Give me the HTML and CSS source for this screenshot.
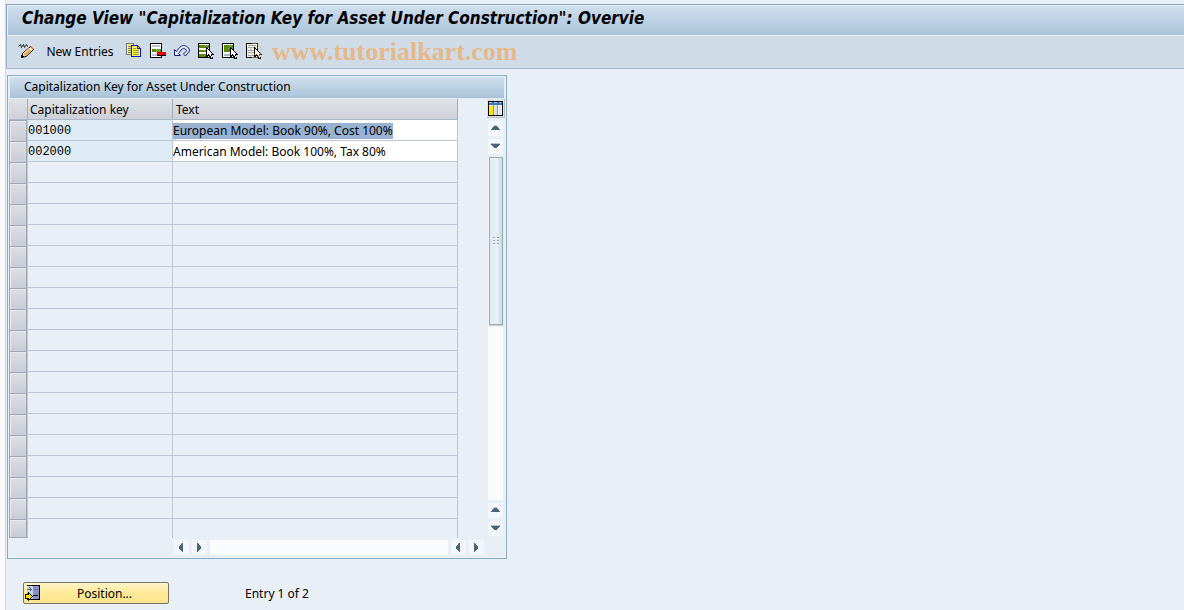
FILE: index.html
```html
<!doctype html>
<html lang="en">
  <head>
    <meta charset="utf-8">
    <title>Change View "Capitalization Key for Asset Under Construction"</title>
    <link rel="stylesheet" href="styles.css">
  </head>
  <body>
    <svg class="symbols" aria-hidden="true">
      <symbol id="up" viewBox="0 0 15 15"><path fill="#b9c4cc" d="M6 4h3v1h1v1h1v1h-7v-1h1v-1h1z"/><path fill="#4d6475" d="M6 5h3v1h1v1h1v1h1v1H3V8h1V7h1V6h1z"/></symbol>
      <symbol id="down" viewBox="0 0 15 15"><path fill="#b9c4cc" d="M3 4h9v1H3z"/><path fill="#4d6475" d="M3 5h9v1h-1v1h-1v1H9v1H6V8H5V7H4V6H3z"/></symbol>
      <symbol id="left" viewBox="0 0 15 15"><path fill="#b9c4cc" d="M7 3h2v2H7z"/><path fill="#4d6475" d="M9 3v9H8v-1H7v-1H6V9H5V6h1V5h1V4h1V3z"/></symbol>
      <symbol id="right" viewBox="0 0 15 15"><path fill="#b9c4cc" d="M5 3h2v2H5z"/><path fill="#4d6475" d="M5 3v9h1v-1h1v-1h1V9h1V6H8V5H7V4H6V3z"/></symbol>
      <symbol id="pointer" viewBox="0 0 8 12"><path d="M0 0h1v1h1v1h1v1h1v1h1v1h1v1h1v1h1v1H6v2h1v2H4v-1H3V9H2v1H1v1H0z"/><path fill="#fff" d="M1 2h1v1h1v1h1v1h1v1h1v1H5v2h1v2H5V9H4V8H3V7H2v1H1z"/></symbol>
    </svg>

    <header class="title-bar">
      <h1>Change View "Capitalization Key for Asset Under Construction": Overvie</h1>
    </header>

    <div class="toolbar">
      <button class="tool" aria-label="Display/Change">
        <svg class="smooth" viewBox="0 0 16 16">
          <path fill="none" stroke="#222" d="M.5 3.500l2-2 1 3 2-3 1 3 2-3 1 2"/>
          <path fill="#fff" stroke="#000" d="M3.500 14.500l1-4 8-7 3 3-7.500 7z"/>
          <path fill="#f0a030" d="M5 11l6-5.500 2 2L7.500 13z"/>
          <path fill="#ffe49a" d="M6 10l5-5 1 1-5.500 5z"/>
          <path fill="#d86020" d="M12 4l1-1 3 3-1 1z"/>
          <path d="M3 12h2v1h1v1H4v1H3z"/>
        </svg>
      </button>
      <button class="tool-text">New Entries</button>
      <button class="tool" aria-label="Copy As">
        <svg viewBox="0 0 16 16">
          <path fill="#ffee66" stroke="#777b80" d="M.5.5h7v11h-7z"/>
          <path stroke="#777b80" d="M2 3.500h4M2 5.500h3M2 7.500h3M2 9.500h3"/>
          <path fill="#ffff50" stroke="#1414c8" d="M5.500 2.500h6l3 3v8h-9z"/>
          <path fill="#fff" stroke="#1414c8" d="M11.500 2.500v3h3z"/>
          <path stroke="#a09a40" d="M7 5.500h3M7 7.500h6M7 9.500h6M7 11.500h6"/>
        </svg>
      </button>
      <button class="tool" aria-label="Delete">
        <svg viewBox="0 0 16 16">
          <path fill="#fff" stroke="#000" d="M.5.5h11v14H.5z"/>
          <path fill="#b8c6d8" d="M2 2h8v2H2zM2 11h5v2H2z"/>
          <path fill="#5c8800" d="M2 6h9v3H2z"/>
          <path fill="#a8c050" d="M6 6h1v1H6zM8 6h1v1H8zM7 7h1v1H7zM9 7h1v1H9zM6 8h1v1H6z"/>
          <path fill="#000" d="M7 10h9v3H7z"/>
          <path fill="#e00" d="M7 9h9v3H7z"/>
        </svg>
      </button>
      <button class="tool" aria-label="Undo Change">
        <svg class="smooth" viewBox="0 0 16 16">
          <path fill="#e4edf5" stroke="#1c1c90" d="M.5 6.500v6h6l-2-2C6 8 8 5.500 9.500 5.500c2 0 3 1.500 3 2.500L9.500 11l2 2 4-5c0-3-3-5.500-6-5.500C7 2.500 5 5 2.500 8.500z"/>
        </svg>
      </button>
      <button class="tool" aria-label="Select All">
        <svg viewBox="0 0 16 16">
          <path fill="#fff" stroke="#000" d="M.5.5h11v14H.5z"/>
          <path fill="#5c8800" d="M1 2h10v3H1zM1 7h9v2H1zM1 11h8v3H1z"/>
          <path fill="#9ab840" d="M7 2h1v1H7zM9 2h1v1H9zM8 3h1v1H8zM6 7h1v1H6zM6 12h1v1H6z"/>
          <use href="#pointer" x="8" y="4" width="8" height="12"/>
        </svg>
      </button>
      <button class="tool" aria-label="Select Block">
        <svg viewBox="0 0 16 16">
          <path fill="#fff" stroke="#000" d="M.5.5h11v14H.5z"/>
          <path fill="#5c8800" d="M2 2h9v7H2z"/>
          <path fill="#9ab840" d="M7 2h1v1H7zM9 2h1v1H9zM8 3h1v1H8zM7 4h1v1H7zM6 5h1v1H6z"/>
          <path fill="#a4b8cc" d="M2 11h7v2H2z"/>
          <use href="#pointer" x="8" y="4" width="8" height="12"/>
        </svg>
      </button>
      <button class="tool" aria-label="Deselect All">
        <svg viewBox="0 0 16 16">
          <path fill="#fff" stroke="#000" d="M.5.5h11v14H.5z"/>
          <path stroke="#8fa4ba" d="M2 2.500h8M2 4.500h8M2 7.500h7M2 9.500h7M2 12.500h7"/>
          <use href="#pointer" x="8" y="4" width="8" height="12"/>
        </svg>
        <span class="copyright">©</span>
      </button>
      <span class="watermark">www.tutorialkart.com</span>
    </div>

    <main>
      <section class="panel">
        <h2>Capitalization Key for Asset Under Construction</h2>
        <div class="panel-body">
          <table>
            <thead>
              <tr>
                <th class="selector"></th>
                <th class="key">Capitalization key</th>
                <th class="text">Text</th>
              </tr>
            </thead>
            <tbody>
              <tr class="filled">
                <td class="selector"><button aria-label="Select row 1"></button></td>
                <td class="key">001000</td>
                <td class="text"><input id="current" type="text" aria-label="Text for 001000" value="European Model: Book 90%, Cost 100%"></td>
              </tr>
              <tr class="filled">
                <td class="selector"><button aria-label="Select row 2"></button></td>
                <td class="key">002000</td>
                <td class="text"><input type="text" aria-label="Text for 002000" value="American Model: Book 100%, Tax 80%"></td>
              </tr>
            </tbody>
          </table>
          <div class="side">
            <button class="config" aria-label="Table settings">
              <svg viewBox="0 0 15 15">
                <path d="M0 0h15v15H0z"/>
                <path fill="#fff" d="M1 1h13v13H1z"/>
                <path fill="#3878c0" d="M1 1h13v3H1z"/>
                <path fill="#a8d0f0" d="M1 1h3v1H1zM6 1h3v1H6zM11 1h2v1h-2z"/>
                <path fill="#ffe600" d="M1 5h4v9H1z"/>
                <path fill="#d8e0e8" d="M6 5h3v9H6zM11 5h2v9h-2z"/>
                <path fill="#8a939c" d="M5 4h1v10H5zM9 4h1v10H9z"/>
              </svg>
            </button>
            <button class="arrow" aria-label="First line"><svg><use href="#up"/></svg></button>
            <button class="arrow" aria-label="Previous line"><svg><use href="#down"/></svg></button>
            <div class="track">
              <div class="thumb"><svg viewBox="0 0 6 8"><path fill="#8fa3b0" d="M0 0h2v1H0zM0 3h2v1H0zM0 6h2v1H0zM4 0h2v1H4zM4 3h2v1H4zM4 6h2v1H4z"/><path fill="#fff" d="M0 1h1v1H0zM0 4h1v1H0zM0 7h1v1H0zM4 1h1v1H4zM4 4h1v1H4zM4 7h1v1H4z"/></svg></div>
            </div>
            <button class="arrow" aria-label="Next line"><svg><use href="#up"/></svg></button>
            <button class="arrow" aria-label="Last line"><svg><use href="#down"/></svg></button>
          </div>
        </div>
        <div class="bottom-scroll">
          <button class="arrow" aria-label="First column"><svg><use href="#left"/></svg></button>
          <button class="arrow" aria-label="Previous column"><svg><use href="#right"/></svg></button>
          <div class="track"></div>
          <button class="arrow" aria-label="Next column"><svg><use href="#left"/></svg></button>
          <button class="arrow" aria-label="Last column"><svg><use href="#right"/></svg></button>
        </div>
      </section>

      <footer>
        <button class="position">
          <svg viewBox="0 0 16 16">
            <path fill="#000" d="M2 0h13v15H2z"/>
            <path fill="#c6d6e6" d="M2 1h6v13H2z"/>
            <path fill="#8c90c8" d="M8 1h6v13H8z"/>
            <path stroke="#56606c" fill="none" d="M2 4.500h4M4.500 2.500l2 2-2 2M2 8.500h3"/>
            <path stroke="#6c70a8" d="M9 4.500h4"/>
            <path stroke="#000" d="M8 10.500h5"/>
            <path fill="#ffe600" stroke="#000" d="M.5 9.500h3v-2l4 4-4 4v-2h-3z"/>
          </svg>
          <span>Position...</span>
        </button>
        <span>Entry 1 of 2</span>
      </footer>
    </main>
    <script>
      // pad the grid with empty lines up to the visible row count
      const tbody = document.querySelector('tbody');
      for (let i = tbody.rows.length; i < 20; i++) {
        tbody.insertAdjacentHTML('beforeend',
          `<tr><td class="selector"><button aria-label="Select row ${i + 1}"></button></td><td class="key"></td><td class="text"></td></tr>`);
      }
      document.getElementById('current').select();
    </script>
  </body>
</html>
```
FILE: styles.css
```css
* {
  box-sizing: border-box;
}
body {
  margin: 0;
  padding-top: 4px;
  background: linear-gradient(to right, #fafafc 5px, #cfd7e2 5px, #cfd7e2 6px, #e8eff6 6px);
  color: #000;
  font: 12px/16px "Noto Sans", sans-serif;
}
button, input {
  margin: 0;
  padding: 0;
  border: 0;
  background: none;
  color: inherit;
  font: inherit;
}
svg {
  display: block;
  shape-rendering: crispEdges;
}
svg.smooth {
  shape-rendering: auto;
}
.symbols {
  position: absolute;
  width: 0;
  height: 0;
}

/* title and toolbar */
.title-bar {
  margin-left: 6px;
  height: 32px;
  padding-left: 15px;
  border-top: 1px solid #8fa5c0;
  border-left: 1px solid #8fa5c0;
  background: linear-gradient(#d0e0ed, #a9c2da);
  box-shadow: inset 1px 1px #e6eff6, inset 0 -1px #e6eff6;
}
h1 {
  margin: 0;
  font: italic bold 17px/27px "DejaVu Sans Condensed", "DejaVu Sans", sans-serif;
  white-space: nowrap;
}
.toolbar {
  display: flex;
  align-items: center;
  gap: 8px;
  height: 33px;
  margin-left: 6px;
  padding-left: 11px;
  padding-bottom: 2px;
  border-left: 1px solid #9db0c8;
  border-bottom: 1px solid #a6b6cc;
  background: #cfdce7;
}
.tool {
  position: relative;
  width: 16px;
  height: 16px;
}
.tool svg {
  width: 16px;
  height: 16px;
}
.tool-text {
  margin: 0 4px;
  padding-top: 2px;
  width: 68px;
  white-space: nowrap;
}
.watermark, .copyright {
  color: #e4b88a;
  font-family: "Liberation Serif", serif;
}
.watermark {
  padding: 2px 0 0 2px;
  font-size: 26px;
  line-height: 28px;
  font-weight: bold;
}
.copyright {
  position: absolute;
  top: -6px;
  left: 0;
  font-size: 22px;
  line-height: 28px;
  opacity: 0.7;
}

/* table control */
main {
  margin-left: 7px;
  padding-top: 6px;
}
.panel {
  width: 500px;
  height: 484px;
  border: 1px solid #8aaccb;
  padding: 1px;
}
h2 {
  margin: 0;
  height: 22px;
  padding-left: 14px;
  border: 1px solid #e0ebf3;
  border-width: 0 1px 1px;
  background: linear-gradient(#d0e0ed, #a9c2da);
  font-size: 12px;
  font-weight: normal;
  line-height: 20px;
}
.panel-body {
  display: flex;
  justify-content: space-between;
  height: 439px;
  padding-right: 1px;
}
table {
  width: 449px;
  border-spacing: 0;
  table-layout: fixed;
}
th {
  height: 21px;
  padding: 2px 3px 0 2px;
  border-right: 1px solid #a4adb9;
  border-bottom: 1px solid #a9b8c8;
  background: linear-gradient(#dfe2e5, #cdd0d9);
  font-weight: normal;
  text-align: left;
}
td {
  height: 21px;
  padding: 0;
  border-right: 1px solid #bcc6d6;
  border-bottom: 1px solid #bcc6d6;
}
tr:last-child td {
  height: 19px;
  border-bottom: 0;
}
.selector {
  width: 19px;
}
td.selector {
  border-bottom: 0;
}
td.selector button {
  display: block;
  width: 18px;
  height: 100%;
  border: 1px solid #a0a7b3;
  border-bottom-width: 0;
  background: linear-gradient(#dcdfe4, #c8ccd6);
  box-shadow: inset 1px 1px #e6e9ed;
}
tr:last-child td.selector button {
  border-bottom-width: 1px;
}
.key {
  width: 145px;
}
th.text {
  padding-left: 3px;
}
td.key {
  padding-top: 2px;
  font: 12px/16px "Liberation Mono", monospace;
}
.filled .key {
  background: #dfebf5;
}
.filled .text {
  padding-top: 2px;
  background: #fff;
}
.text input {
  display: block;
  width: 100%;
  height: 16px;
  outline: none;
}
.text input::selection {
  background: #98b2d0;
  color: #000;
}

/* scroll bars */
.side {
  display: flex;
  flex-direction: column;
  align-items: center;
  gap: 3px;
  width: 17px;
  padding-bottom: 2px;
}
.config {
  width: 18px;
  height: 19px;
  padding: 2px 1px 1px;
  border: 1px solid #b8bec8;
  border-width: 0 1px 1px 0;
  background: #dfe3e8;
}
.config svg {
  width: 15px;
  height: 15px;
}
.arrow {
  width: 15px;
  height: 15px;
  background: #f3f6fa;
}
.arrow svg {
  width: 15px;
  height: 15px;
}
.track {
  flex: 1;
  background: #fafbfc;
}
.side .track {
  width: 15px;
}
.thumb {
  display: flex;
  align-items: center;
  justify-content: center;
  height: 168px;
  margin-left: 1px;
  border: 1px solid #a2abb1;
  background: linear-gradient(to right, #dfeaf3, #e8f1f7 60%, #c6d9e6);
  box-shadow: 0 1px 1px #c5ccd1;
}
.thumb svg {
  width: 6px;
  height: 8px;
}
.bottom-scroll {
  display: flex;
  gap: 3px;
  height: 15px;
  margin: 2px 21px 0 165px;
}

/* position line */
footer {
  display: flex;
  align-items: center;
  gap: 76px;
  padding: 23px 16px 5px;
}
footer span {
  padding-top: 2px;
}
.position {
  display: flex;
  align-items: center;
  width: 146px;
  height: 22px;
  padding-left: 1px;
  border: 1px solid #77756c;
  border-radius: 2px;
  background: linear-gradient(#fff5c8, #ffea98 50%, #fbe48d);
}
.position svg {
  width: 16px;
  height: 16px;
}
.position span {
  flex: 1;
}
```
